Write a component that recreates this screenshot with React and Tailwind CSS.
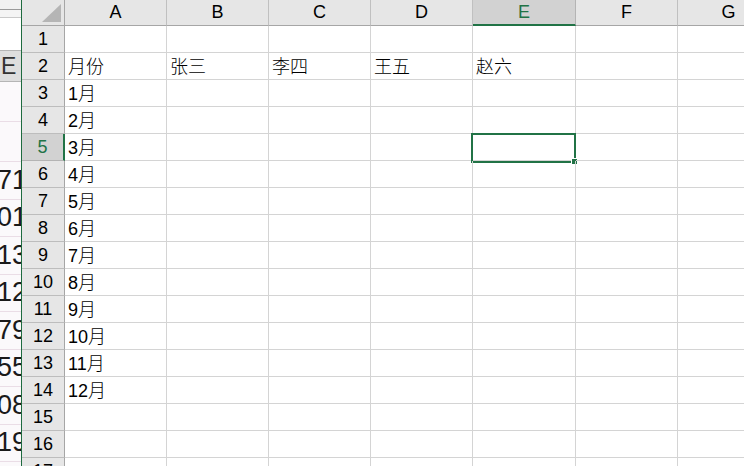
import React from 'react'

const cols = [
  { key: 'A', w: 'w-[102px]' },
  { key: 'B', w: 'w-[102px]' },
  { key: 'C', w: 'w-[102px]' },
  { key: 'D', w: 'w-[102px]' },
  { key: 'E', w: 'w-[103px]' },
  { key: 'F', w: 'w-[102px]' },
  { key: 'G', w: 'w-[102px]' },
]

const months = ['1月', '2月', '3月', '4月', '5月', '6月', '7月', '8月', '9月', '10月', '11月', '12月']

// row 2 carries the names, rows 3-14 the months
const rows = Array.from({ length: 17 }, (_, i) => {
  const n = i + 1
  if (n === 2) return { n, cells: ['月份', '张三', '李四', '王五', '赵六'] }
  if (n >= 3 && n <= 14) return { n, cells: [months[n - 3]] }
  return { n, cells: [] }
})

const behindNums = ['71', '01', '13', '12', '79', '55', '08', '19']

function BehindWindow() {
  return (
    <div className="w-[21px] shrink-0 h-full overflow-hidden bg-[#fbf9fb] flex flex-col">
      <div className="h-[9px] bg-[#f1f1f1]" />
      <div className="h-px bg-[#9a9a9a]" />
      <div className="h-[7px] bg-[#f4f4f4]" />
      <div className="h-px bg-[#c9c9c9]" />
      <div className="h-[32px] bg-white" />
      <div className="h-[32px] bg-[#dedede] border-y border-[#b5b5b5] flex items-center pl-px text-[23px] leading-none text-[#333]">E</div>
      <div className="h-[80px] flex flex-col">
        <div className="h-[40px] border-b border-[#eadde6]" />
        <div className="h-[40px] border-b border-[#eadde6]" />
      </div>
      {behindNums.map((t) => (
        <div
          key={t}
          className="h-[37.5px] shrink-0 flex items-center -ml-[3px] text-[27px] leading-none text-[#1a1a1a] border-b border-[#eadde6] whitespace-nowrap"
        >
          {t}
        </div>
      ))}
    </div>
  )
}

function Corner() {
  return (
    <div className="relative w-[43px] h-[26px] shrink-0 bg-[#e6e6e6] border-r border-b border-[#a6a6a6]">
      <svg className="absolute right-[3px] bottom-[3px]" width="19" height="18" viewBox="0 0 19 18">
        <polygon points="19,0 19,18 0,18" fill="#b5b5b5" />
      </svg>
    </div>
  )
}

export default function App() {
  return (
    <div
      className="w-[744px] h-[466px] overflow-hidden bg-white flex"
      style={{ fontFamily: '"Liberation Sans", "Noto Sans CJK SC", sans-serif' }}
    >
      <BehindWindow />
      <div className="w-px shrink-0 bg-[#1e6b3f]" />

      <div className="flex flex-col shrink-0">
        {/* column headers */}
        <div className="flex">
          <Corner />
          {cols.map((c) => {
            const sel = c.key === 'E'
            return (
              <div
                key={c.key}
                className={`${c.w} h-[26px] shrink-0 flex items-center justify-center text-[18px] border-r ${
                  sel
                    ? 'bg-[#d2d2d2] text-[#217346] border-b-2 border-b-[#217346] border-r-[#b4b4b4]'
                    : 'bg-[#e6e6e6] text-black border-b border-b-[#a6a6a6] border-r-[#c0c0c0]'
                }`}
              >
                {c.key}
              </div>
            )
          })}
        </div>

        {/* body rows */}
        {rows.map((r) => {
          const selRow = r.n === 5
          return (
            <div key={r.n} className="flex">
              <div
                className={`w-[43px] h-[27px] shrink-0 flex items-center justify-center text-[18px] border-b ${
                  selRow
                    ? 'bg-[#d2d2d2] text-[#217346] border-r-2 border-r-[#217346] border-b-[#b4b4b4]'
                    : 'bg-[#e6e6e6] text-black border-r border-r-[#a6a6a6] border-b-[#bdbdbd]'
                }`}
              >
                {r.n}
              </div>
              {cols.map((c, ci) => (
                <div
                  key={c.key}
                  className={`relative ${c.w} h-[27px] shrink-0 border-r border-b border-[#d4d4d4] flex items-center pl-[3px] pt-[2px] text-[18px] text-black font-light whitespace-nowrap`}
                >
                  {r.cells[ci] || ''}
                  {selRow && c.key === 'E' && (
                    <div className="absolute -left-[2px] -top-px w-[105px] h-[30px] border-2 border-[#217346]">
                      <div className="absolute -right-[4px] -bottom-[4px] w-[7px] h-[7px] bg-[#217346] border border-white" />
                    </div>
                  )}
                </div>
              ))}
            </div>
          )
        })}
      </div>
    </div>
  )
}
